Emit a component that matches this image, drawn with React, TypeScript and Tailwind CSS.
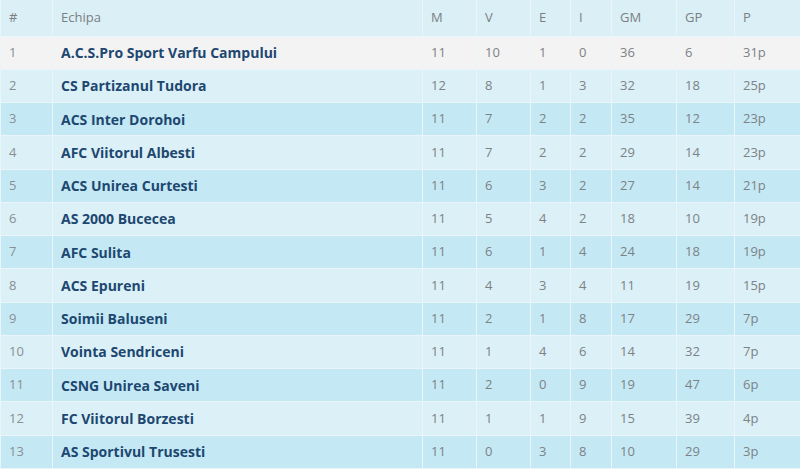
import React from 'react';

type Row = {
  pos: number;
  team: string;
  m: number;
  v: number;
  e: number;
  i: number;
  gm: number;
  gp: number;
  p: string;
};

const rows: Row[] = [
  { pos: 1, team: 'A.C.S.Pro Sport Varfu Campului', m: 11, v: 10, e: 1, i: 0, gm: 36, gp: 6, p: '31p' },
  { pos: 2, team: 'CS Partizanul Tudora', m: 12, v: 8, e: 1, i: 3, gm: 32, gp: 18, p: '25p' },
  { pos: 3, team: 'ACS Inter Dorohoi', m: 11, v: 7, e: 2, i: 2, gm: 35, gp: 12, p: '23p' },
  { pos: 4, team: 'AFC Viitorul Albesti', m: 11, v: 7, e: 2, i: 2, gm: 29, gp: 14, p: '23p' },
  { pos: 5, team: 'ACS Unirea Curtesti', m: 11, v: 6, e: 3, i: 2, gm: 27, gp: 14, p: '21p' },
  { pos: 6, team: 'AS 2000 Bucecea', m: 11, v: 5, e: 4, i: 2, gm: 18, gp: 10, p: '19p' },
  { pos: 7, team: 'AFC Sulita', m: 11, v: 6, e: 1, i: 4, gm: 24, gp: 18, p: '19p' },
  { pos: 8, team: 'ACS Epureni', m: 11, v: 4, e: 3, i: 4, gm: 11, gp: 19, p: '15p' },
  { pos: 9, team: 'Soimii Baluseni', m: 11, v: 2, e: 1, i: 8, gm: 17, gp: 29, p: '7p' },
  { pos: 10, team: 'Vointa Sendriceni', m: 11, v: 1, e: 4, i: 6, gm: 14, gp: 32, p: '7p' },
  { pos: 11, team: 'CSNG Unirea Saveni', m: 11, v: 2, e: 0, i: 9, gm: 19, gp: 47, p: '6p' },
  { pos: 12, team: 'FC Viitorul Borzesti', m: 11, v: 1, e: 1, i: 9, gm: 15, gp: 39, p: '4p' },
  { pos: 13, team: 'AS Sportivul Trusesti', m: 11, v: 0, e: 3, i: 8, gm: 10, gp: 29, p: '3p' },
];

const headers = ['#', 'Echipa', 'M', 'V', 'E', 'I', 'GM', 'GP', 'P'];
const widths = ['w-[52px]', 'w-[370px]', 'w-[54px]', 'w-[54px]', 'w-[40px]', 'w-[41px]', 'w-[65px]', 'w-[58px]', 'w-[66px]'];

const cell = 'border border-[#e9f5f9] px-2 text-left align-middle';

export default function App() {
  return (
    <div className="w-[800px] h-[472px] bg-white font-['Open_Sans',sans-serif] text-[13px]">
      <table className="w-[800px] table-fixed border-collapse">
        <colgroup>
          {widths.map((w, idx) => (
            <col key={idx} className={w} />
          ))}
        </colgroup>
        <thead>
          <tr className="h-[36px] bg-[#dbeff6]">
            {headers.map(h => (
              <th key={h} className={`${cell} border-t-0 font-normal text-[#7a7f82]`}>
                {h}
              </th>
            ))}
          </tr>
        </thead>
        <tbody>
          {rows.map((r, idx) => {
            const bg =
              idx === 0
                ? 'bg-[#f3f3f3]'
                : idx % 2 === 1
                ? 'bg-[#dbf0f7]'
                : 'bg-[#c4e9f5]';
            return (
              <tr key={r.pos} className={`h-[33.25px] ${bg}`}>
                <td className={`${cell} text-[#8a8f92]`}>{r.pos}</td>
                <td className={`${cell} text-[14px] font-bold text-[#1d4770]`}>{r.team}</td>
                <td className={`${cell} text-[#7d8285]`}>{r.m}</td>
                <td className={`${cell} text-[#7d8285]`}>{r.v}</td>
                <td className={`${cell} text-[#7d8285]`}>{r.e}</td>
                <td className={`${cell} text-[#7d8285]`}>{r.i}</td>
                <td className={`${cell} text-[#7d8285]`}>{r.gm}</td>
                <td className={`${cell} text-[#7d8285]`}>{r.gp}</td>
                <td className={`${cell} text-[#7d8285]`}>{r.p}</td>
              </tr>
            );
          })}
        </tbody>
      </table>
    </div>
  );
}
